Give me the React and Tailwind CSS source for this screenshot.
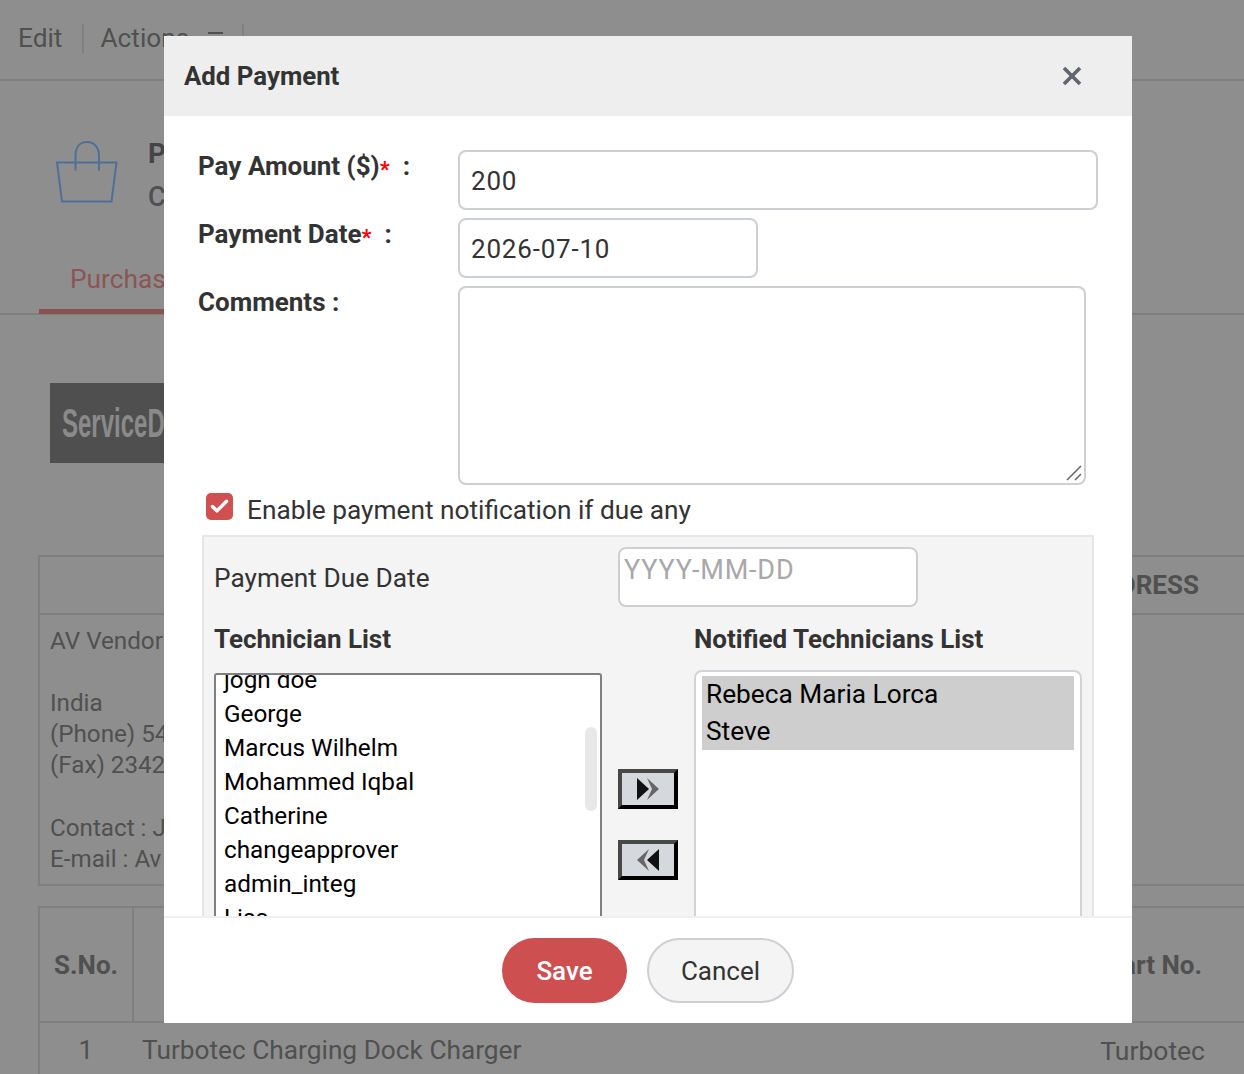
import { Check } from "lucide-react";

const technicians = ["jogn doe", "George", "Marcus Wilhelm", "Mohammed Iqbal", "Catherine", "changeapprover", "admin_integ", "Lisa"];

function BagIcon() {
  return (
    <svg width="62" height="62" viewBox="0 0 62 62" fill="none" stroke="#4f7096" strokeWidth="2">
      <path d="M1 21.5H60.5L55.5 60.5H6Z" />
      <path d="M19.5 29.5V15C19.5 6 24 1 31 1S43 6 43 15V29.5" />
    </svg>
  );
}

function MoveButton({ back }) {
  return (
    <button className="h-10 w-[60px] flex items-center justify-center border-4 border-t-[#484848] border-l-[#484848] border-r-black border-b-black bg-[#d5d8dc]">
      <svg width="24" height="24" viewBox="0 0 24 24" className={back ? "rotate-180" : ""}>
        <path d="M11 1L23 12L11 23L16 12Z" fill="#666666" />
        <path d="M1 1L13 12L1 23Z" fill="#111111" />
      </svg>
    </button>
  );
}

function BackgroundPage() {
  return (
    <div className="w-[1244px] text-[26.25px] text-[#505050]">
      <div className="h-[81px] flex items-center pl-[18px] pb-[2px] border-b-2 border-[#7f7f7f]">
        <span>Edit</span>
        <span className="ml-5 h-[29px] w-0.5 bg-[#808080]"></span>
        <span className="ml-4">Actions</span>
        <span className="ml-[19px] mb-[12px] h-0.5 w-[15px] bg-[#505050]"></span>
        <span className="ml-[19px] h-[29px] w-0.5 bg-[#808080]"></span>
      </div>
      <div className="flex pl-[56px] pt-[60px] h-[173px]">
        <BagIcon />
        <div className="ml-[30px] -mt-[3px]">
          <p className="font-bold text-[28px] leading-[32px] text-[#454545]">Purchase Order</p>
          <p className="mt-[11px] font-medium text-[27px] leading-[32px]">Created</p>
        </div>
      </div>
      <div className="h-[61px] pl-[39px] border-b-2 border-[#7f7f7f]">
        <div className="w-[300px] h-[60px] pl-[31px] pt-[6px] border-b-[5px] border-[#8b5050] text-[#8c5555]">Purchases</div>
      </div>
      <div className="ml-[50px] mt-[68px] h-20 w-[400px] pl-3 pt-5 bg-[#4f4f4f] overflow-hidden">
        <span className="inline-block origin-left scale-x-[0.6] font-['Liberation_Sans',sans-serif] font-bold text-[40px] leading-[40px] text-[#8a8a8a]">ServiceDesk</span>
      </div>
      <div className="ml-[38px] mt-[92px] h-[331px] border-2 border-r-0 border-[#7f7f7f]">
        <div className="h-[58px] flex items-center justify-end pr-[45px] border-b-2 border-[#7f7f7f] font-bold text-[26px]">SHIPPING ADDRESS</div>
        <div className="pl-[10px] pt-[11px] text-[24.2px] leading-[31px]">
          <p>AV Vendor</p>
          <p className="h-[31px]"></p>
          <p>India</p>
          <p>(Phone) 54</p>
          <p>(Fax) 2342</p>
          <p className="h-[32px]"></p>
          <p>Contact : J</p>
          <p>E-mail : Av</p>
        </div>
      </div>
      <div className="ml-[38px] mt-[20px] border-2 border-r-0 border-[#7f7f7f]">
        <div className="h-[115px] flex items-center border-b-2 border-[#7f7f7f] font-bold text-[26px]">
          <div className="w-[94px] h-full flex items-center pl-[14px] pt-0.5 border-r-2 border-[#7f7f7f]">S.No.</div>
          <div className="flex-1 pt-0.5 text-right pr-[42px]">Part No.</div>
        </div>
        <div className="flex pt-[8px] h-[60px]">
          <div className="w-[92px] text-center">1</div>
          <div className="ml-[10px] flex-1">Turbotec Charging Dock Charger</div>
          <div className="pr-[39px] text-[26.5px]">Turbotec</div>
        </div>
      </div>
    </div>
  );
}

export default function App() {
  return (
    <div className="relative w-[1244px] h-[1074px] overflow-hidden bg-[#8e8e8e] font-['Roboto',sans-serif]">
      <BackgroundPage />
      <div className="absolute left-[164px] top-[36px] w-[968px] h-[987px] flex flex-col bg-white text-[#333333]">
        <div className="h-20 shrink-0 flex items-center justify-between pl-5 pr-[50px] bg-[#eeeeee]">
          <h4 className="font-bold text-[25.8px]">Add Payment</h4>
          <svg width="20" height="20" viewBox="0 0 20 20" stroke="#5f666f" strokeWidth="3.6">
            <path d="M2 2L18 18M18 2L2 18" />
          </svg>
        </div>

        <div className="flex-1 min-h-0 overflow-hidden pl-[34px] pt-[34px] text-[26.25px]">
          <div className="flex h-[68px]">
            <label className="w-[260px] font-bold text-[26px] leading-[32px]">
              Pay Amount ($)<span className="text-[22px] align-[-2px] text-[#ff0000]">*</span><span className="ml-[13px]">:</span>
            </label>
            <input readOnly value="200" className="w-[640px] h-[60px] px-[11px] pt-0.5 text-[26px] tracking-[0.8px] border-2 border-[#ccd0d5] rounded-lg outline-none" />
          </div>
          <div className="flex h-[68px]">
            <label className="w-[260px] font-bold text-[26px] leading-[32px]">
              Payment Date<span className="text-[22px] align-[-2px] text-[#ff0000]">*</span><span className="ml-[13px]">:</span>
            </label>
            <input readOnly value="2026-07-10" className="w-[300px] h-[60px] px-[11px] pt-0.5 text-[26px] tracking-[0.8px] border-2 border-[#ccd0d5] rounded-lg outline-none" />
          </div>
          <div className="flex">
            <label className="w-[260px] font-bold text-[26px] leading-[32px]">Comments :</label>
            <div className="relative">
              <textarea readOnly className="block w-[628px] h-[199px] resize-none border-2 border-[#ccd0d5] rounded-lg outline-none"></textarea>
              <svg width="18" height="18" viewBox="0 0 18 18" stroke="#666666" strokeWidth="1.5" className="absolute right-[3px] bottom-[3px]">
                <path d="M2 16L16 2M10 16L16 10" />
              </svg>
            </div>
          </div>

          <div className="flex h-[50px] ml-2">
            <span className="mt-2 w-[27px] h-[27px] flex items-center justify-center rounded-[5px] bg-[#d14f4f]">
              <Check size={21} color="#ffffff" strokeWidth={4} />
            </span>
            <span className="ml-[14px] mt-[9px] leading-[32px]">Enable payment notification if due any</span>
          </div>

          <div className="ml-1 w-[892px] h-[400px] pl-[10px] pt-[10px] border-2 border-[#e6e6e6] bg-[#f4f4f4]">
            <div className="flex items-center h-[60px]">
              <span className="w-[404px] pt-1">Payment Due Date</span>
              <input readOnly placeholder="YYYY-MM-DD" className="w-[300px] h-[60px] pl-[4px] pb-[15px] text-[27px] tracking-[0.8px] bg-white placeholder:text-[#a8a8a8] border-2 border-[#ccd0d5] rounded-lg outline-none" />
            </div>
            <div className="flex mt-4">
              <div className="w-[388px]">
                <p className="font-bold text-[26px] leading-[32px]">Technician List</p>
                <div className="relative mt-[18px] h-[300px] overflow-hidden pl-2 border-2 border-[#808080] rounded-[3px] bg-white text-black text-[24.3px]">
                  <div className="-mt-[12px] leading-[34px]">
                    {technicians.map((name) => (
                      <p key={name}>{name}</p>
                    ))}
                  </div>
                  <div className="absolute left-[369px] top-[52px] w-3 h-[84px] rounded-md bg-[#e8e8e8]"></div>
                </div>
              </div>
              <div className="w-[92px] pl-4 pt-[146px] flex flex-col gap-[31px]">
                <MoveButton />
                <MoveButton back />
              </div>
              <div className="w-[388px]">
                <p className="font-bold text-[26px] leading-[32px]">Notified Technicians List</p>
                <div className="mt-[15px] h-[300px] pt-1 px-1.5 border-2 border-[#d0d4d9] rounded-lg bg-white text-black">
                  <div className="pl-1 bg-[#cecece] leading-[37px]">
                    <p>Rebeca Maria Lorca</p>
                    <p>Steve</p>
                  </div>
                </div>
              </div>
            </div>
          </div>
        </div>

        <div className="h-[107px] shrink-0 flex justify-center gap-5 pt-[20px] border-t-2 border-[#f0f0f0] bg-white text-[26px]">
          <button className="w-[125px] h-[65px] pt-0.5 rounded-full bg-[#ce4f4f] text-white font-medium">Save</button>
          <button className="w-[147px] h-[65px] pt-0.5 rounded-full border-2 border-[#ccd0d5] bg-[#f4f4f4]">Cancel</button>
        </div>
      </div>
    </div>
  );
}
